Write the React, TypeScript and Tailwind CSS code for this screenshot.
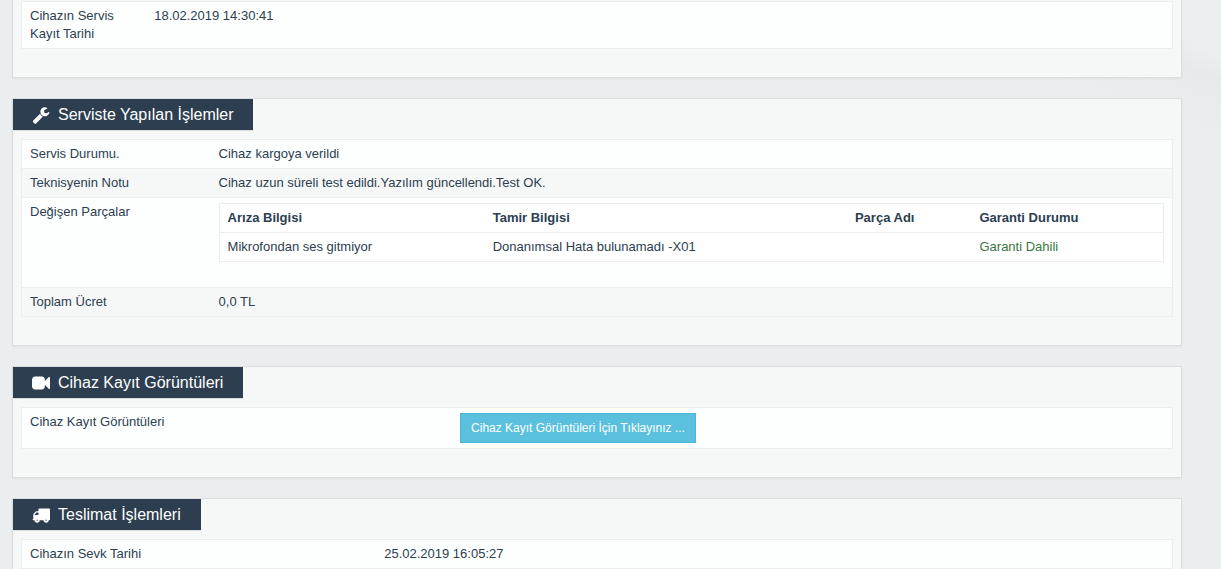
import type { ReactNode } from "react";

const WRENCH =
  "M1092 1052l-682 682q-37 37-90 37-52 0-91-37l-106-108q-38-36-38-90 0-53 38-91l681-681q39 98 114.500 173.500t173.500 114.500zm634-435q0 39-23 106-47 134-164.500 217.500t-258.500 83.500q-185 0-316.500-131.500t-131.500-316.500 131.500-316.500 316.500-131.500q58 0 121.500 16.500t107.500 46.500q16 11 16 28t-16 28l-293 169v224l193 107q5-3 79-48.500t135.500-81 70.500-35.500q15 0 23.500 10t8.500 25z";
const CAMERA =
  "M1792 352v1088q0 42-39 59-13 5-25 5-27 0-45-19l-403-403v166q0 119-84.500 203.500t-203.500 84.500h-704q-119 0-203.500-84.500t-84.500-203.500v-704q0-119 84.500-203.500t203.500-84.500h704q119 0 203.500 84.500t84.500 203.500v165l403-402q18-19 45-19 12 0 25 5 39 17 39 59z";
const TRUCK =
  "M576 1408q0-26-19-45t-45-19-45 19-19 45 19 45 45 19 45-19 19-45zm-320-512h384v-256h-158q-13 0-22 9l-195 195q-9 9-9 22v30zm1216 512q0-26-19-45t-45-19-45 19-19 45 19 45 45 19 45-19 19-45zm320-1088v1024q0 15-4 26.500t-13.500 18.500-16.500 11.500-23.500 6-22.500 2-25.500 0-22.500-.5q0 106-75 181t-181 75-181-75-75-181h-384q0 106-75 181t-181 75-181-75-75-181h-64q-3 0-22.500.5t-25.500 0-22.500-2-23.500-6-16.500-11.500-13.500-18.500-4-26.500q0-26 19-45t45-19v-320q0-8-.5-35t0-38 2.500-34.500 6.500-37 14-30.500 22.500-30l198-198q19-19 50.500-32t58.500-13h160v-192q0-26 19-45t45-19h1024q26 0 45 19t19 45z";

function Panel({ icon, title, children }: { icon: string; title: string; children: ReactNode }) {
  return (
    <section className="border border-[#dbdddd] bg-[#f6f8f7] pb-7 shadow-[0_1px_2px_rgba(0,0,0,0.05)]">
      <h2 className="mb-2 flex h-8 w-fit items-center gap-2 border-b border-[#dbdddd] bg-[#2c3e50] pr-5 pl-[19px] text-base text-white">
        <svg viewBox="0 0 1792 1792" className="size-[18px]" fill="currentColor" aria-hidden="true">
          <path d={icon} />
        </svg>
        {title}
      </h2>
      <div className="px-2">{children}</div>
    </section>
  );
}

function InfoTable({ children }: { children: ReactNode }) {
  return (
    <table className="w-full table-fixed border-separate border-spacing-0 border border-t-0 border-[#eceeee]">
      <tbody>{children}</tbody>
    </table>
  );
}

function Row({ label, labelWidth, children }: { label: string; labelWidth: string; children: ReactNode }) {
  return (
    <tr className="odd:bg-[#fdfefe] even:bg-[#f6f7f7]">
      <th
        scope="row"
        className={`${labelWidth} border-t border-[#eceeee] px-2 py-[5px] text-left align-top font-normal`}
      >
        {label}
      </th>
      <td className="border-t border-[#eceeee] px-2 py-[5px] align-top">{children}</td>
    </tr>
  );
}

function PartsTable() {
  return (
    <table className="mb-5 w-full table-fixed border-separate border-spacing-0 border border-[#eceeee] bg-white">
      <thead>
        <tr className="text-left">
          <th scope="col" className="w-[28.1%] px-2 py-[5px]">Arıza Bilgisi</th>
          <th scope="col" className="w-[38.4%] px-2 py-[5px]">Tamir Bilgisi</th>
          <th scope="col" className="w-[13.2%] px-2 py-[5px]">Parça Adı</th>
          <th scope="col" className="px-2 py-[5px]">Garanti Durumu</th>
        </tr>
      </thead>
      <tbody>
        <tr>
          <td className="border-t border-[#eceeee] px-2 py-[5px]">Mikrofondan ses gitmiyor</td>
          <td className="border-t border-[#eceeee] px-2 py-[5px]">Donanımsal Hata bulunamadı -X01</td>
          <td className="border-t border-[#eceeee] px-2 py-[5px]"></td>
          <td className="border-t border-[#eceeee] px-2 py-[5px] text-[#3c763d]">Garanti Dahili</td>
        </tr>
      </tbody>
    </table>
  );
}

export default function App() {
  return (
    <main className="h-screen overflow-hidden bg-[#ebeeef] bg-[linear-gradient(200deg,#eceff0_0px,#eceff0_50px,#e7eaeb_75px,#ebeeef_130px)] pr-[39px] pl-3 font-['Liberation_Sans',Arial,sans-serif] text-[13px] leading-[18px] text-[#2c3e50]">
      <div className="flex flex-col gap-5">
        <section className="border border-t-0 border-[#dbdddd] bg-[#f6f8f7] px-2 pt-px pb-7 shadow-[0_1px_2px_rgba(0,0,0,0.05)]">
          <InfoTable>
            <Row label="Cihazın Servis Kayıt Tarihi" labelWidth="w-[10.8%]">18.02.2019 14:30:41</Row>
          </InfoTable>
        </section>

        <Panel icon={WRENCH} title="Serviste Yapılan İşlemler">
          <InfoTable>
            <Row label="Servis Durumu." labelWidth="w-[16.4%]">Cihaz kargoya verildi</Row>
            <Row label="Teknisyenin Notu" labelWidth="w-[16.4%]">
              Cihaz uzun süreli test edildi.Yazılım güncellendi.Test OK.
            </Row>
            <Row label="Değişen Parçalar" labelWidth="w-[16.4%]">
              <PartsTable />
            </Row>
            <Row label="Toplam Ücret" labelWidth="w-[16.4%]">0,0 TL</Row>
          </InfoTable>
        </Panel>

        <Panel icon={CAMERA} title="Cihaz Kayıt Görüntüleri">
          <InfoTable>
            <Row label="Cihaz Kayıt Görüntüleri" labelWidth="w-[37.4%]">
              <button
                type="button"
                className="block h-[30px] cursor-pointer border border-[#46b8da] bg-[#5bc0de] px-2.5 text-xs text-white"
              >
                Cihaz Kayıt Görüntüleri İçin Tıklayınız ...
              </button>
            </Row>
          </InfoTable>
        </Panel>

        <Panel icon={TRUCK} title="Teslimat İşlemleri">
          <InfoTable>
            <Row label="Cihazın Sevk Tarihi" labelWidth="w-[30.8%]">25.02.2019 16:05:27</Row>
          </InfoTable>
        </Panel>
      </div>
    </main>
  );
}
